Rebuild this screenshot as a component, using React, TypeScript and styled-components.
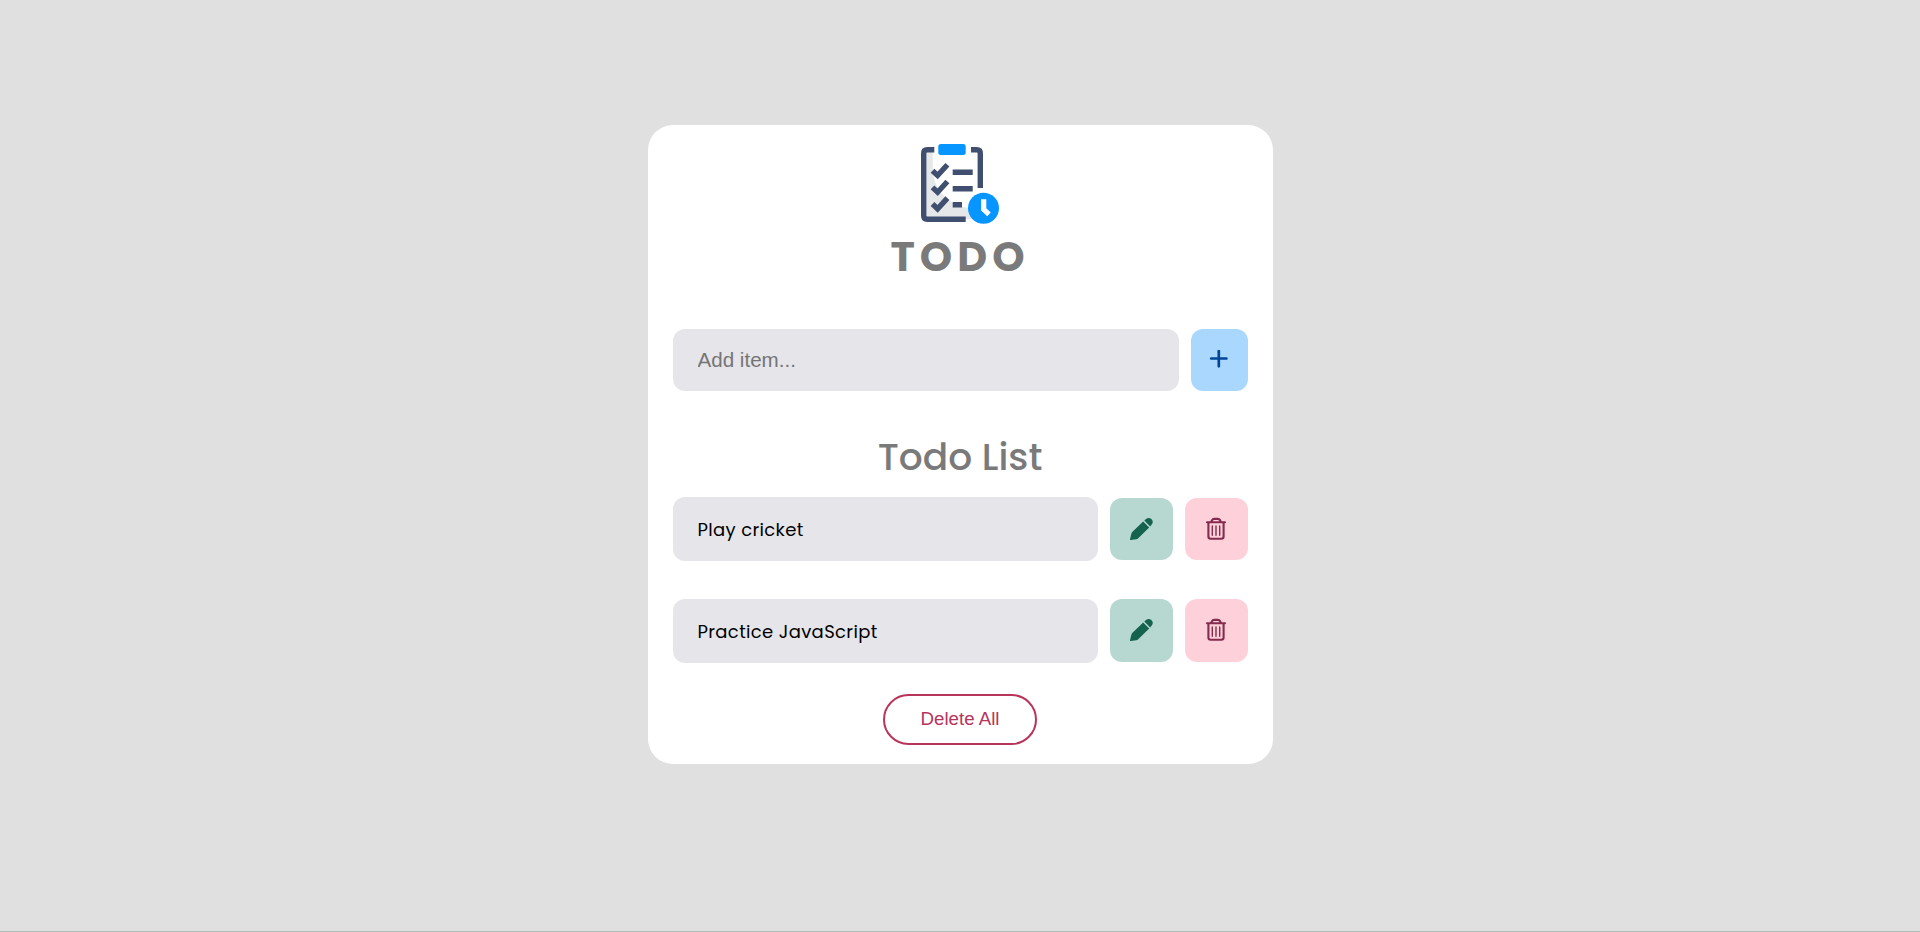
import React from "react";
import styled, { createGlobalStyle } from "styled-components";

const GlobalStyle = createGlobalStyle`
  *, *::before, *::after { box-sizing: border-box; }
  body { margin: 0; background: #e0e0e0; font-family: Poppins, Inter, "Open Sans", sans-serif; }
  h1, h2, ul { margin: 0; padding: 0; }
`;

const Page = styled.main`
  height: 932px;
  padding-top: 125px;
  background: #e0e0e0;
  border-bottom: 1px solid #adbdb9;
`;

const Card = styled.section`
  display: flex;
  flex-direction: column;
  align-items: center;
  width: 625px;
  height: 639px;
  margin: 0 auto;
  padding: 19px 25px;
  border-radius: 25px;
  background: #fff;
`;

const Title = styled.h1`
  height: 60px;
  margin-top: 3px;
  font-size: 41.2px;
  font-weight: 700;
  line-height: 60px;
  letter-spacing: 5px;
  color: #7a7a7a;
`;

const AddForm = styled.div`
  display: grid;
  grid-template-columns: 1fr 57px;
  gap: 12px;
  width: 100%;
  height: 62px;
  margin-top: 42px;
`;

const AddInput = styled.input`
  min-width: 0;
  padding: 0 25px;
  border: 0;
  border-radius: 12px;
  background: #e5e5ea;
  font: 20.6px "Liberation Sans", Arial, sans-serif;
  outline: 0;
  &::placeholder { color: #757575; opacity: 1; }
`;

const tones = {
  add: { background: "#aad7fd", color: "#024596" },
  edit: { background: "#b6d8d0", color: "#15624f" },
  remove: { background: "#fed0da", color: "#852b4e" },
};

const IconButton = styled.button<{ $tone: keyof typeof tones }>`
  display: flex;
  align-items: center;
  justify-content: center;
  padding: 0 0 0.3px;
  border: 0;
  border-radius: 12px;
  background: ${({ $tone }) => tones[$tone].background};
  color: ${({ $tone }) => tones[$tone].color};
`;

const Heading = styled.h2`
  height: 54px;
  margin-top: 39px;
  font-size: 37.5px;
  font-weight: 500;
  line-height: 55px;
  color: #7a7a7a;
`;

const List = styled.ul`
  display: flex;
  flex-direction: column;
  gap: 37.5px;
  width: 100%;
  margin-top: 13px;
  list-style: none;
`;

const Row = styled.li`
  display: grid;
  grid-template-columns: 1fr 63px 63px;
  gap: 12px;
  align-items: center;
  height: 64px;
  ${IconButton} { height: 62.4px; }
`;

const ItemText = styled.div`
  height: 64px;
  padding-left: 25px;
  border-radius: 12px;
  background: #e5e5ea;
  color: #000;
  font-size: 18px;
  line-height: 65px;
  letter-spacing: 0.35px;
`;

const DeleteAll = styled.button`
  width: 154px;
  height: 51px;
  margin-top: 31.5px;
  padding: 0 0 1px;
  border: 2px solid #b8345b;
  border-radius: 26px;
  background: transparent;
  color: #b8345b;
  font: 18.7px "Liberation Sans", Arial, sans-serif;
`;

const Logo = () => (
  <svg width="80" height="80" viewBox="0 0 80 80" fill="none">
    <path d="M6 8H12.7V28C15 47 29 61 48 64L52 75H6Z" fill="#e6e7e9" />
    <g stroke="#404e6f" strokeWidth="5.4">
      <path d="M14.3 5.7H7.2Q3.7 5.7 3.7 9.2V71.7Q3.7 75.2 7.2 75.2H45.7M51 5.7H56.8Q60.3 5.7 60.3 9.2V44" />
      <path d="M32.7 28.3H52.7M32.7 44.7H52.7M32.7 60.8H42" />
      <path d="M12.5 26.7L17.6 31.5L27.4 20.8M12.5 43.4L17.6 48.2L27.4 37.5M12.5 60L17.6 64.8L27.4 54.1" />
    </g>
    <rect x="18.3" y="0" width="27.4" height="11" rx="2.5" fill="#0795ff" />
    <circle cx="63.5" cy="64.3" r="15.5" fill="#0795ff" />
    <path d="M63.7 55.2V65.3L69 70.3" stroke="#fff" strokeWidth="5.2" />
  </svg>
);

const PlusIcon = () => (
  <svg width="20" height="20" viewBox="0 0 20 20" fill="none" stroke="currentColor" strokeWidth="2.7" strokeLinecap="round">
    <path d="M9.8 0.9V16.3M2.2 8.5H17.4" />
  </svg>
);

const PencilIcon = () => (
  <svg width="24" height="24" viewBox="0 0 24 24" fill="currentColor">
    <path d="M14.2 4.5L20.2 10.5L9.2 21.2Q8.4 22 7.2 22.2L1.8 23.1Q.8 23.2 1 22.2L2.3 16.9Q2.6 15.7 3.5 14.8Z" />
    <path d="M15.3 3.5L17 2Q19.8-.2 22.4 2Q25 4.8 22.7 7.6L21.2 9.4Z" />
  </svg>
);

const TrashIcon = () => (
  <svg width="22" height="24" viewBox="0 0 22 24" fill="none" stroke="currentColor" strokeWidth="2.1" strokeLinecap="round" strokeLinejoin="round">
    <path d="M2 5.2H20M3.4 5.4V19.6Q3.4 21.8 5.6 21.8H16.4Q18.6 21.8 18.6 19.6V5.4M6 5L7.2 2.9Q7.8 1.9 9 1.9H13Q14.2 1.9 14.8 2.9L16 5" />
    <path d="M7.3 9V18.3M11 9V18.3M14.7 9V18.3" strokeWidth="1.4" />
  </svg>
);

const items = ["Play cricket", "Practice JavaScript"];

export default function App() {
  return (
    <Page>
      <GlobalStyle />
      <Card>
        <Logo />
        <Title>TODO</Title>
        <AddForm>
          <AddInput placeholder="Add item..." aria-label="Add item" />
          <IconButton $tone="add" aria-label="Add"><PlusIcon /></IconButton>
        </AddForm>
        <Heading>Todo List</Heading>
        <List>
          {items.map((text) => (
            <Row key={text}>
              <ItemText>{text}</ItemText>
              <IconButton $tone="edit" aria-label="Edit"><PencilIcon /></IconButton>
              <IconButton $tone="remove" aria-label="Delete"><TrashIcon /></IconButton>
            </Row>
          ))}
        </List>
        <DeleteAll>Delete All</DeleteAll>
      </Card>
    </Page>
  );
}
